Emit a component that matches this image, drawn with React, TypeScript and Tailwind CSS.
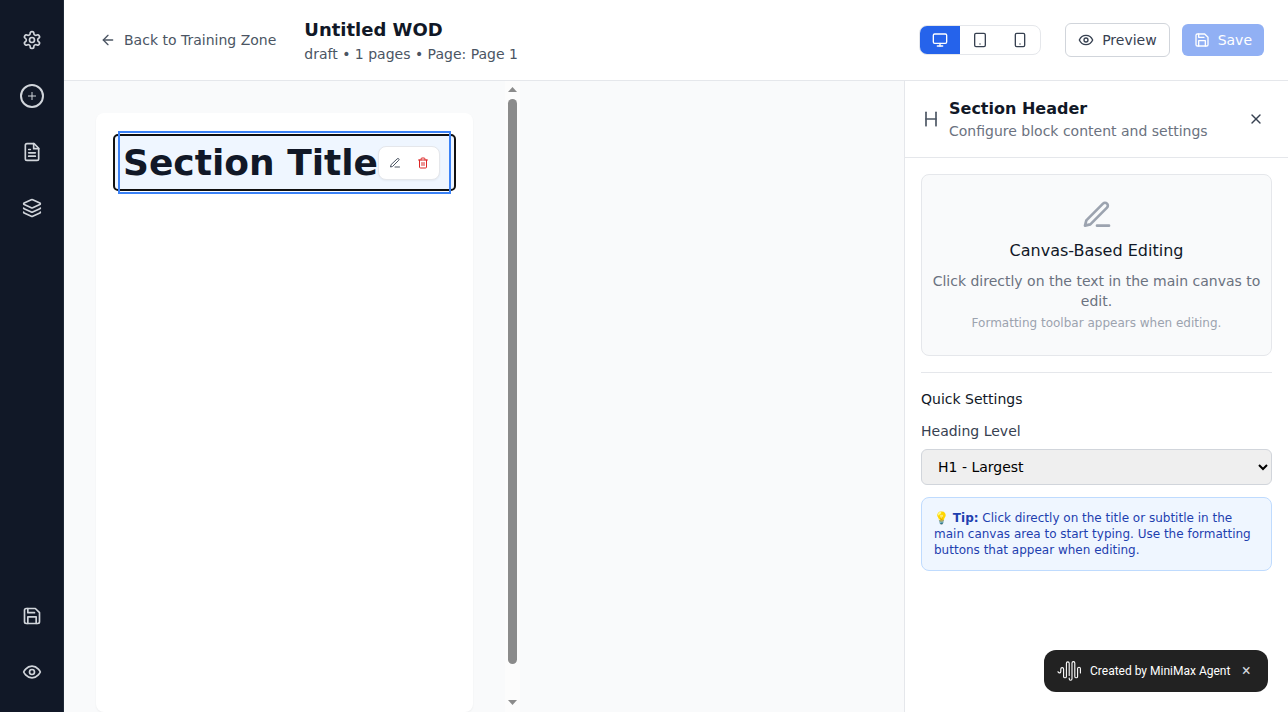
import type { ReactNode } from "react";
import { ArrowLeft, Heading, Layers, Monitor, Smartphone, Tablet, Trash2, X } from "lucide-react";

type IconProps = { size: number; className?: string };

function Icon({ size, className, children }: IconProps & { children: ReactNode }) {
  return (
    <svg width={size} height={size} viewBox="0 0 24 24" fill="none" stroke="currentColor" strokeWidth="2" strokeLinecap="round" strokeLinejoin="round" className={className}>
      {children}
    </svg>
  );
}

const Eye = (props: IconProps) => (
  <Icon {...props}>
    <path d="M2 12s3-7 10-7 10 7 10 7-3 7-10 7-10-7-10-7Z" />
    <circle cx="12" cy="12" r="3" />
  </Icon>
);

const Save = (props: IconProps) => (
  <Icon {...props}>
    <path d="M19 21H5a2 2 0 0 1-2-2V5a2 2 0 0 1 2-2h11l5 5v11a2 2 0 0 1-2 2z" />
    <path d="M17 21v-8H7v8M7 3v5h8" />
  </Icon>
);

const PenLine = (props: IconProps) => (
  <Icon {...props}>
    <path d="M12 20h9" />
    <path d="M16.5 3.5a2.12 2.12 0 0 1 3 3L7 19l-4 1 1-4Z" />
  </Icon>
);

const FileText = (props: IconProps) => (
  <Icon {...props}>
    <path d="M14.5 2H6a2 2 0 0 0-2 2v16a2 2 0 0 0 2 2h12a2 2 0 0 0 2-2V7.5L14.5 2z" />
    <path d="M14 2v6h6M16 13H8M16 17H8M10 9H8" />
  </Icon>
);

const Settings = (props: IconProps) => (
  <Icon {...props}>
    <path d="M12.22 2h-.44a2 2 0 0 0-2 2v.18a2 2 0 0 1-1 1.73l-.43.25a2 2 0 0 1-2 0l-.15-.08a2 2 0 0 0-2.73.73l-.22.38a2 2 0 0 0 .73 2.73l.15.1a2 2 0 0 1 1 1.72v.51a2 2 0 0 1-1 1.74l-.15.09a2 2 0 0 0-.73 2.73l.22.38a2 2 0 0 0 2.73.73l.15-.08a2 2 0 0 1 2 0l.43.25a2 2 0 0 1 1 1.73V20a2 2 0 0 0 2 2h.44a2 2 0 0 0 2-2v-.18a2 2 0 0 1 1-1.73l.43-.25a2 2 0 0 1 2 0l.15.08a2 2 0 0 0 2.73-.73l.22-.39a2 2 0 0 0-.73-2.73l-.15-.08a2 2 0 0 1-1-1.74v-.5a2 2 0 0 1 1-1.74l.15-.09a2 2 0 0 0 .73-2.73l-.22-.38a2 2 0 0 0-2.73-.73l-.15.08a2 2 0 0 1-2 0l-.43-.25a2 2 0 0 1-1-1.73V4a2 2 0 0 0-2-2z" />
    <circle cx="12" cy="12" r="3" />
  </Icon>
);

function Sidebar() {
  return (
    <aside className="flex w-16 shrink-0 flex-col items-center justify-between border-r border-[#1f2937] bg-[#111827] py-4 text-[#d1d5db]">
      <div className="flex flex-col gap-2">
        <button className="flex size-12 items-center justify-center"><Settings size={20} /></button>
        <button className="flex size-12 items-center justify-center">
          <span className="flex size-6 items-center justify-center rounded-full border-2 border-[#d1d5db]">
            <svg width="8" height="8" viewBox="0 0 8 8" stroke="currentColor" strokeWidth="1"><path d="M4 0v8M0 4h8" /></svg>
          </span>
        </button>
        <button className="flex size-12 items-center justify-center"><FileText size={20} /></button>
        <button className="flex size-12 items-center justify-center"><Layers size={20} /></button>
      </div>
      <div className="flex flex-col gap-2">
        <button className="flex size-12 items-center justify-center"><Save size={20} /></button>
        <button className="flex size-12 items-center justify-center"><Eye size={20} /></button>
      </div>
    </aside>
  );
}

function TopBar() {
  return (
    <header className="flex h-[81px] shrink-0 items-center justify-between border-b border-[#e5e7eb] bg-white px-6 text-sm">
      <div className="flex items-center gap-4">
        <button className="flex items-center gap-2 px-3 py-2 text-[#4b5563]"><ArrowLeft size={16} />Back to Training Zone</button>
        <div>
          <h1 className="text-lg font-semibold leading-7 text-[#111827]">Untitled WOD</h1>
          <p className="leading-5 text-[#4b5563]">draft • 1 pages • Page: Page 1</p>
        </div>
      </div>
      <div className="flex items-center">
        <div className="flex overflow-hidden rounded-lg border border-[#e5e7eb] text-[#374151]">
          <button className="flex h-7 w-10 items-center justify-center bg-[#2563eb] text-white"><Monitor size={16} /></button>
          <button className="flex h-7 w-10 items-center justify-center"><Tablet size={16} /></button>
          <button className="flex h-7 w-10 items-center justify-center"><Smartphone size={16} /></button>
        </div>
        <button className="ml-6 flex h-[34px] items-center gap-2 rounded-md border border-[#d1d5db] px-3 text-[#374151]"><Eye size={16} />Preview</button>
        <button className="ml-3 flex h-8 items-center gap-2 rounded-md bg-[#2563eb] px-3 text-white opacity-50"><Save size={16} />Save</button>
      </div>
    </header>
  );
}

function Canvas() {
  return (
    <main className="flex min-w-0 flex-1 bg-[#f9fafb]">
      <div className="w-[441px] pl-8 pt-8">
        <div className="h-[599px] w-[377px] rounded-lg bg-white px-[17px] pt-[21px] shadow-xs">
          <div className="relative h-[57px] w-[343px] rounded-[5px] border-2 border-[#101010] bg-[#eff6ff]">
            <div className="absolute -top-[5px] left-[3px] flex h-[63px] w-[333px] items-center border-2 border-[#3b82f6] pl-[3px]">
              <h1 className="whitespace-nowrap text-4xl font-bold leading-10 text-[#111827]">Section Title</h1>
              <div className="absolute right-[9px] top-[13px] flex h-[34px] w-[62px] items-center justify-center rounded-lg border border-[#e5e7eb] bg-white shadow-xs">
                <button className="flex w-7 justify-center text-[#4b5563]"><PenLine size={12} /></button>
                <button className="flex w-7 justify-center text-[#dc2626]"><Trash2 size={12} /></button>
              </div>
            </div>
            <div className="absolute -top-[3px] left-[5px] h-px w-[329px] bg-white" />
            <div className="absolute -bottom-[3px] left-[5px] h-px w-[329px] bg-white" />
          </div>
        </div>
      </div>
      <div className="flex w-[15px] flex-col items-center bg-[#fcfcfc] pt-[6px]">
        <svg width="9" height="5" className="fill-[#8b8b8b]"><path d="M4.5 0L9 5H0Z" /></svg>
        <div className="mt-[7px] h-[565px] w-[9px] rounded-full bg-[#8b8b8b]" />
        <svg width="9" height="5" className="mt-9 fill-[#8b8b8b]"><path d="M0 0H9L4.5 5Z" /></svg>
      </div>
    </main>
  );
}

function SettingsPanel() {
  return (
    <aside className="w-96 shrink-0 border-l border-[#e5e7eb] bg-white">
      <div className="flex h-[77px] items-center border-b border-[#e5e7eb] px-4">
        <Heading size={20} className="text-[#4b5563]" />
        <div className="ml-2 flex-1">
          <h3 className="font-semibold leading-6 text-[#111827]">Section Header</h3>
          <p className="text-sm leading-5 text-[#6b7280]">Configure block content and settings</p>
        </div>
        <button className="flex size-8 items-center justify-center text-[#374151]"><X size={16} /></button>
      </div>
      <div className="p-4">
        <div className="flex h-[182px] flex-col items-center rounded-lg border border-[#e5e7eb] bg-[#f9fafb] px-2 pt-6 text-center">
          <PenLine size={32} className="text-[#9ca3af]" />
          <h4 className="mt-2 leading-6 text-[#111827]">Canvas-Based Editing</h4>
          <p className="mt-2 text-sm leading-5 text-[#6b7280]">Click directly on the text in the main canvas to edit.</p>
          <p className="mt-1 text-xs leading-4 text-[#9ca3af]">Formatting toolbar appears when editing.</p>
        </div>
        <div className="mt-4 border-t border-[#e5e7eb] pt-4 text-sm leading-5">
          <h4 className="text-[#111827]">Quick Settings</h4>
          <label className="mt-3 block text-[#374151]">Heading Level</label>
          <select className="mt-2 block h-9 w-full rounded-md border border-[#d1d5db] bg-[#efefef] px-3 text-black">
            <option>H1 - Largest</option>
          </select>
          <p className="mt-3 rounded-lg border border-[#bfdbfe] bg-[#eff6ff] p-3 text-xs leading-4 text-[#1e40af]">💡 <strong>Tip:</strong> Click directly on the title or subtitle in the main canvas area to start typing. Use the formatting buttons that appear when editing.</p>
        </div>
      </div>
    </aside>
  );
}

function AgentBadge() {
  return (
    <div className="fixed bottom-5 right-5 flex h-[42px] w-56 items-center rounded-xl bg-[#222] pl-[13px] font-['Roboto',sans-serif] text-xs text-white">
      <svg width="25" height="22" viewBox="0 0 25 22" fill="none" stroke="white" strokeWidth="1.1" strokeLinecap="round">
        <path d="M1 11.5a1.4 1.4 0 0 0 2.8 0V9a1.4 1.4 0 0 1 2.8 0v7.4a1.4 1.4 0 0 0 2.8 0V3.3a1.4 1.4 0 0 1 2.8 0V15.5M12.2 18v.8a1.4 1.4 0 0 0 2.8 0V3a1.4 1.4 0 0 1 2.8 0v13.4a1.4 1.4 0 0 0 2.8 0V8.6a1.4 1.4 0 0 1 2.8 0V13" />
      </svg>
      <span className="ml-2 w-[141px] whitespace-nowrap">Created by MiniMax Agent</span>
      <button className="ml-[11px] text-base leading-none text-[#d1d5db]">×</button>
    </div>
  );
}

export default function App() {
  return (
    <div className="flex h-screen overflow-hidden bg-[#f9fafb] font-['DejaVu_Sans',sans-serif]">
      <Sidebar />
      <div className="flex min-w-0 flex-1 flex-col">
        <TopBar />
        <div className="flex min-h-0 flex-1">
          <Canvas />
          <SettingsPanel />
        </div>
      </div>
      <AgentBadge />
    </div>
  );
}
